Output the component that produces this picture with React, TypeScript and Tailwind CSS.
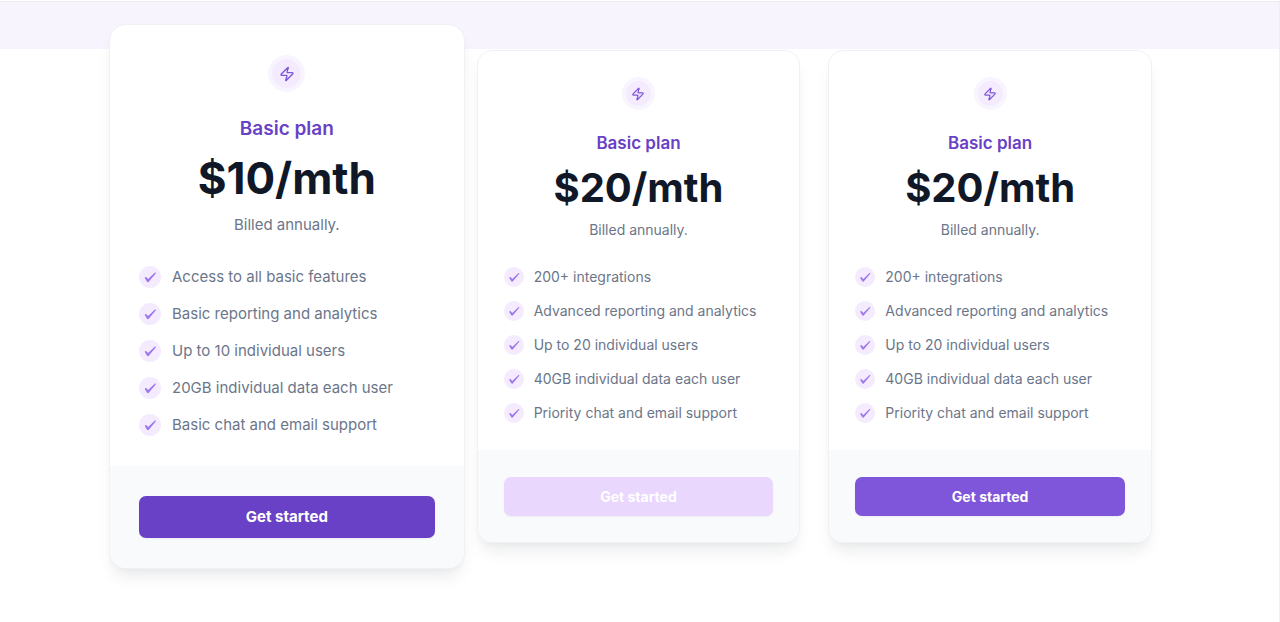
import { Zap } from "lucide-react";

type Plan = {
  id: string;
  name: string;
  price: string;
  billing: string;
  features: string[];
  featured?: boolean;
  disabled?: boolean;
};

const plans: Plan[] = [
  {
    id: "basic",
    name: "Basic plan",
    price: "$10/mth",
    billing: "Billed annually.",
    featured: true,
    features: [
      "Access to all basic features",
      "Basic reporting and analytics",
      "Up to 10 individual users",
      "20GB individual data each user",
      "Basic chat and email support",
    ],
  },
  {
    id: "advanced",
    name: "Basic plan",
    price: "$20/mth",
    billing: "Billed annually.",
    disabled: true,
    features: [
      "200+ integrations",
      "Advanced reporting and analytics",
      "Up to 20 individual users",
      "40GB individual data each user",
      "Priority chat and email support",
    ],
  },
  {
    id: "priority",
    name: "Basic plan",
    price: "$20/mth",
    billing: "Billed annually.",
    features: [
      "200+ integrations",
      "Advanced reporting and analytics",
      "Up to 20 individual users",
      "40GB individual data each user",
      "Priority chat and email support",
    ],
  },
];

const large = {
  card: "-mx-4 rounded-[17px]",
  body: "px-[29px] pt-[30px] pb-[30px]",
  ring: "size-[37px] border-4",
  zap: "size-4",
  name: "mt-6 text-[19px] leading-[26px]",
  price: "mt-2 text-[44px] leading-[56px]",
  billing: "mt-2 text-[15px] leading-[22px]",
  list: "mt-[30px] gap-[15px]",
  item: "gap-[11px] text-[15px] leading-[22px]",
  tick: "size-[22px]",
  footer: "px-[29px] pt-[30px] pb-[30px]",
  button: "h-[42px] text-[15px]",
};

const regular = {
  card: "rounded-[15px]",
  body: "px-[26px] pt-[26px] pb-[27px]",
  ring: "size-[33px] border-4",
  zap: "size-[14px]",
  name: "mt-[21px] text-[17px] leading-[24px]",
  price: "mt-2 text-[40px] leading-[50px]",
  billing: "mt-[7px] text-[14px] leading-5",
  list: "mt-[27px] gap-[14px]",
  item: "gap-[10px] text-[14px] leading-5",
  tick: "size-5",
  footer: "px-[26px] pt-[27px] pb-[26px]",
  button: "h-[39px] text-[14px]",
};

function TickIcon({ className }: { className: string }) {
  return (
    <svg viewBox="0 0 24 24" fill="none" className={`shrink-0 ${className}`} aria-hidden="true">
      <circle cx="12" cy="12" r="12" fill="#f4ebff" />
      <path
        d="M17.096 7.39L9.936 14.3L8.036 12.27C7.686 11.94 7.136 11.92 6.736 12.2C6.346 12.49 6.236 13 6.476 13.41L8.726 17.07C8.946 17.41 9.326 17.62 9.756 17.62C10.166 17.62 10.556 17.41 10.776 17.07C11.136 16.6 18.006 8.41 18.006 8.41C18.906 7.49 17.816 6.68 17.096 7.38Z"
        fill="#9e77ed"
      />
    </svg>
  );
}

function PlanCard({ plan }: { plan: Plan }) {
  const s = plan.featured ? large : regular;
  const tone = plan.disabled
    ? "bg-[#e9d7fe]"
    : plan.featured
      ? "bg-[#6941c6]"
      : "bg-[#7f56d9]";

  return (
    <article
      className={`overflow-hidden border border-[#f0f1f4] bg-white shadow-[0_12px_16px_-4px_rgba(16,24,40,0.08),0_4px_6px_-2px_rgba(16,24,40,0.03)] ${s.card}`}
    >
      <div className={s.body}>
        <div className="flex flex-col items-center text-center">
          <span
            className={`flex items-center justify-center rounded-full border-[#f9f5ff] bg-[#f4ebff] text-[#7f56d9] ${s.ring}`}
          >
            <Zap className={s.zap} strokeWidth={2} aria-hidden="true" />
          </span>
          <h2 className={`font-semibold text-[#6941c6] ${s.name}`}>{plan.name}</h2>
          <p className={`font-bold text-[#101828] ${s.price}`}>{plan.price}</p>
          <p className={`text-[#6b768a] ${s.billing}`}>{plan.billing}</p>
        </div>
        <ul className={`flex flex-col ${s.list}`}>
          {plan.features.map((feature) => (
            <li key={feature} className={`flex items-center text-[#6b768a] ${s.item}`}>
              <TickIcon className={s.tick} />
              {feature}
            </li>
          ))}
        </ul>
      </div>
      <div className={`bg-[#f9fafc] ${s.footer}`}>
        <button
          type="button"
          disabled={plan.disabled}
          className={`w-full rounded-[7px] font-bold text-white shadow-[0_1px_2px_rgba(16,24,40,0.05)] ${tone} ${s.button}`}
        >
          Get started
        </button>
      </div>
    </article>
  );
}

export default function App() {
  return (
    <div className="min-h-screen border-r border-[#f0f0f2] bg-white pt-px font-['Inter',sans-serif]">
      <div className="h-12 border-t border-[#e9e8ef] bg-[#f7f4fe]" />
      <main className="-mt-[25px] pr-[2px] pb-12">
        <div className="mx-auto grid max-w-[1027px] grid-cols-3 items-center gap-7">
          {plans.map((plan) => (
            <PlanCard key={plan.id} plan={plan} />
          ))}
        </div>
      </main>
    </div>
  );
}
